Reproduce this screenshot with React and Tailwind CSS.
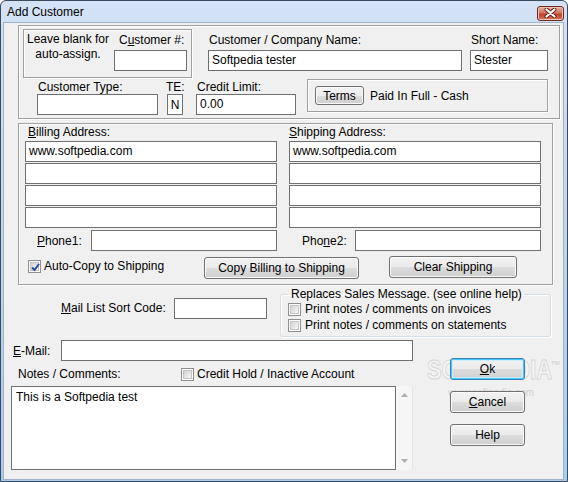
import React from "react";

const inputCls =
  "h-[21px] border border-[#707070] bg-white px-[3px] text-[12px] leading-[19px] whitespace-nowrap overflow-hidden";
const etched =
  "border border-[#a0a0a0] shadow-[inset_1px_1px_0_#ffffff,1px_1px_0_#ffffff]";
const btnCls =
  "flex items-center justify-center rounded-[3px] border border-[#707070] bg-[linear-gradient(#f2f2f2_0%,#ebebeb_50%,#dddddd_50%,#cfcfcf_100%)] shadow-[inset_0_0_0_1px_#fbfbfb] text-[12px] leading-[14px] text-black";

function Check({ checked }) {
  return (
    <div className="flex h-[13px] w-[13px] shrink-0 items-center justify-center border border-[#8f8f8f] bg-white p-[1px]">
      <div className="relative flex h-full w-full items-center justify-center border border-[#c4c4c4] bg-[linear-gradient(135deg,#d2d2d2,#f7f7f7)]">
        {checked && (
          <svg width="11" height="11" viewBox="0 0 11 11" className="absolute left-[-1px] top-[-1px]">
            <path d="M2 5.5 L4.5 8 L9 2" fill="none" stroke="#27499c" strokeWidth="2" />
          </svg>
        )}
      </div>
    </div>
  );
}

function Btn({ className, children }) {
  return <div className={`${btnCls} ${className}`}>{children}</div>;
}

export default function App() {
  return (
    <div className="h-[482px] w-[568px] overflow-hidden bg-white font-['Liberation_Sans',Arial,sans-serif] text-[12px] leading-[14px] text-black">
      <div className="flex h-[482px] w-[568px] flex-col rounded-t-[6px] border border-[#3b4a5c] bg-[linear-gradient(#d3e3f5,#bcd3ec_60%,#a7cdee)]">
        {/* Title bar */}
        <div className="flex h-[21px] shrink-0 items-center pl-[6px] pr-[3px]">
          <span className="text-[12px] leading-[14px] text-black">Add Customer</span>
          <div className="ml-auto mt-[3px] flex h-[15px] w-[27px] items-center justify-center rounded-[3px] border border-[#6d2a20] bg-[linear-gradient(#eab1a3,#d27560_45%,#c0432a_55%,#d8765e)] shadow-[inset_0_0_0_1px_#f0c4b8]">
            <svg width="13" height="10" viewBox="0 0 13 10">
              <path d="M2.5 1.5 L10.5 8.5 M10.5 1.5 L2.5 8.5" stroke="#5a1c12" strokeWidth="4" strokeLinecap="round" />
              <path d="M2.5 1.5 L10.5 8.5 M10.5 1.5 L2.5 8.5" stroke="#ffffff" strokeWidth="2.2" strokeLinecap="round" />
            </svg>
          </div>
        </div>

        {/* Client area */}
        <div className="relative mb-[1px] ml-[2px] mr-[3px] flex flex-1 flex-col border border-[#9fb2c8] bg-[#f0f0f0]">
          {/* Watermark (drawn beneath the controls) */}
          <div className="pointer-events-none absolute left-[423px] top-[333px] origin-left scale-x-[0.78] whitespace-nowrap text-[28px] font-bold leading-[28px] text-[#fafafa]/60 [-webkit-text-stroke:1px_#d6d6d6]">
            SOFTPEDIA
          </div>
          <div className="pointer-events-none absolute left-[547px] top-[337px] text-[6px] leading-[6px] text-[#cccccc]">
            TM
          </div>
          <div className="pointer-events-none absolute left-[444px] top-[365px] text-[10px] leading-[10px] text-[#d0d0d0]">
            www.softpedia.com
          </div>

          {/* Top group */}
          <div className={`relative ml-[14px] mt-[2px] flex h-[94px] w-[542px] flex-col ${etched}`}>
            <div className="ml-[4px] mt-[3px] flex items-start">
              <div className={`flex h-[49px] w-[169px] items-start ${etched}`}>
                <div className="ml-[2px] mt-[2px] w-[84px] text-center leading-[15px]">
                  <div>Leave blank for</div>
                  <div>auto-assign.</div>
                </div>
                <div className="ml-[4px] mt-[3px] flex flex-col">
                  <div className="pl-[5px]">
                    C<span className="underline">u</span>stomer #:
                  </div>
                  <div className={`${inputCls} mt-[3px] w-[73px]`}></div>
                </div>
              </div>
              <div className="ml-[16px] mt-[4px] flex flex-col">
                <div className="pl-[1px]">Customer / Company Name:</div>
                <div className={`${inputCls} mt-[3px] w-[254px]`}>Softpedia tester</div>
              </div>
              <div className="ml-[8px] mt-[4px] flex flex-col">
                <div className="pl-[1px]">Short Name:</div>
                <div className={`${inputCls} mt-[3px] w-[78px]`}>Stester</div>
              </div>
            </div>
            <div className="mt-[2px] flex items-start">
              <div className="ml-[18px] flex flex-col">
                <div className="pl-[1px]">Customer Type:</div>
                <div className={`${inputCls} w-[121px]`}></div>
              </div>
              <div className="ml-[8px] flex w-[18px] flex-col">
                <div>TE:</div>
                <div className="ml-[1px] flex h-[21px] w-[16px] items-center justify-center border border-[#707070] bg-white">
                  N
                </div>
              </div>
              <div className="ml-[12px] flex flex-col">
                <div className="pl-[1px]">Credit Limit:</div>
                <div className={`${inputCls} w-[100px]`}>0.00</div>
              </div>
              <div className={`-mt-[1px] ml-[11px] flex h-[33px] w-[241px] items-center pl-[7px] ${etched}`}>
                <Btn className="h-[19px] w-[49px]">Terms</Btn>
                <span className="ml-[6px]">Paid In Full - Cash</span>
              </div>
            </div>
          </div>

          {/* Address group */}
          <div className={`relative ml-[14px] mt-[4px] h-[162px] w-[535px] ${etched}`}>
            <div className="ml-[6px] mt-[1px] grid grid-cols-[252px_252px] gap-x-[12px]">
              <div className="flex flex-col">
                <div className="pl-[3px]">
                  <span className="underline">B</span>illing Address:
                </div>
                <div className="mt-[2px] flex flex-col gap-[1px]">
                  <div className={`${inputCls} w-[252px]`}>www.softpedia.com</div>
                  <div className={`${inputCls} w-[252px]`}></div>
                  <div className={`${inputCls} w-[252px]`}></div>
                  <div className={`${inputCls} w-[252px]`}></div>
                </div>
                <div className="mt-[2px] flex items-center">
                  <span className="pl-[12px]">
                    <span className="underline">P</span>hone1:
                  </span>
                  <div className={`${inputCls} ml-auto w-[186px]`}></div>
                </div>
              </div>
              <div className="flex flex-col">
                <div>
                  <span className="underline">S</span>hipping Address:
                </div>
                <div className="mt-[2px] flex flex-col gap-[1px]">
                  <div className={`${inputCls} w-[252px]`}>www.softpedia.com</div>
                  <div className={`${inputCls} w-[252px]`}></div>
                  <div className={`${inputCls} w-[252px]`}></div>
                  <div className={`${inputCls} w-[252px]`}></div>
                </div>
                <div className="mt-[2px] flex items-center">
                  <span className="pl-[13px]">
                    Pho<span className="underline">n</span>e2:
                  </span>
                  <div className={`${inputCls} ml-auto w-[186px]`}></div>
                </div>
              </div>
            </div>
            <div className="ml-[9px] mt-[5px] flex items-start">
              <div className="mt-[3px] flex w-[176px] items-center">
                <Check checked />
                <span className="ml-[3px]">Auto-Copy to Shipping</span>
              </div>
              <Btn className="mt-[1px] h-[22px] w-[155px]">Copy Billing to Shipping</Btn>
              <Btn className="ml-[30px] h-[22px] w-[128px]">Clear Shipping</Btn>
            </div>
          </div>

          {/* Mail list + Replaces */}
          <div className="relative mt-[2px] flex items-start">
            <div className="ml-[57px] mt-[14px] w-[113px]">
              <span className="underline">M</span>ail List Sort Code:
            </div>
            <div className={`${inputCls} mt-[11px] w-[93px]`}></div>
            <fieldset className="ml-[13px] w-[271px] rounded-[3px] border border-[#d3dde6] pb-[3px] pl-[7px] shadow-[inset_1px_1px_0_#ffffff,1px_1px_0_#ffffff]">
              <legend className="px-[3px] leading-[14px]">Replaces Sales Message. (see online help)</legend>
              <div className="flex h-[16px] items-center">
                <Check />
                <span className="ml-[4px]">Print notes / comments on invoices</span>
              </div>
              <div className="flex h-[16px] items-center">
                <Check />
                <span className="ml-[4px]">Print notes / comments on statements</span>
              </div>
            </fieldset>
          </div>

          {/* Email, notes, buttons */}
          <div className="relative mt-[3px] flex items-start">
            <div className="ml-[7px] flex w-[402px] flex-col">
              <div className="flex h-[21px] items-center">
                <span className="w-[50px] pl-[2px]">
                  <span className="underline">E</span>-Mail:
                </span>
                <div className={`${inputCls} w-[352px]`}></div>
              </div>
              <div className="mt-[6px] flex h-[14px] items-center">
                <span className="w-[170px] pl-[7px]">Notes / Comments:</span>
                <Check />
                <span className="ml-[3px]">Credit Hold / Inactive Account</span>
              </div>
              <div className="mt-[5px] flex h-[84px]">
                <div className="h-[84px] w-[385px] border border-[#707070] bg-white px-[4px] pt-[3px]">
                  This is a Softpedia test
                </div>
                <div className="flex h-[84px] w-[17px] flex-col items-center justify-between border-r border-[#e6e6e6] bg-[#f6f6f6] py-[7px]">
                  <svg width="7" height="4" viewBox="0 0 7 4">
                    <path d="M0 4 L3.5 0 L7 4 Z" fill="#b0b0b0" />
                  </svg>
                  <svg width="7" height="4" viewBox="0 0 7 4">
                    <path d="M0 0 L3.5 4 L7 0 Z" fill="#b0b0b0" />
                  </svg>
                </div>
              </div>
            </div>
            <div className="ml-[37px] flex flex-col">
              <Btn className="mt-[18px] h-[22px] w-[75px] !border-[#3c7fb1] !shadow-[inset_0_0_0_1px_#48c8f8,inset_0_0_0_2px_#cdeefc]">
                <span className="underline">O</span>k
              </Btn>
              <Btn className="mt-[11px] h-[22px] w-[75px]">
                <span className="underline">C</span>ancel
              </Btn>
              <Btn className="mt-[11px] h-[22px] w-[75px]">Help</Btn>
            </div>
          </div>
        </div>
      </div>
    </div>
  );
}
